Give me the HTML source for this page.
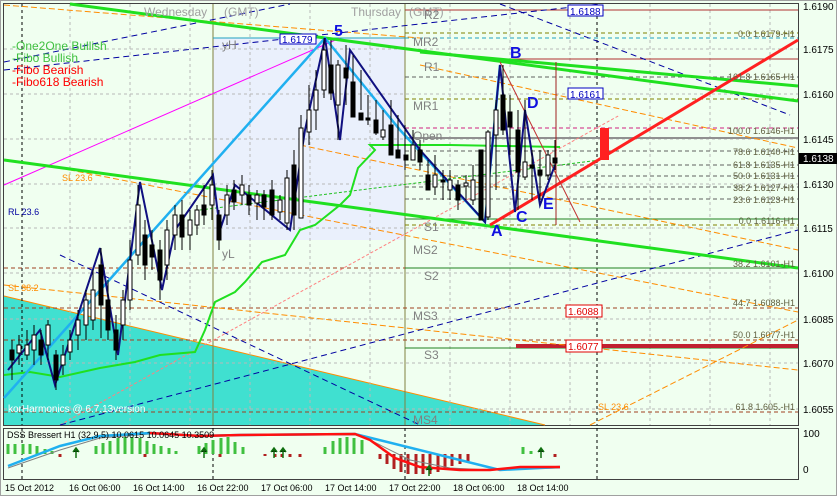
<!DOCTYPE html><html><head><meta charset="utf-8"><style>
body{margin:0;background:#d4d0c8;}
svg{display:block;font-family:"Liberation Sans",sans-serif;}
</style></head><body>
<svg width="837" height="496" xmlns="http://www.w3.org/2000/svg">
<rect x="0" y="0" width="837" height="496" fill="#f0fff0"/>
<rect x="0.5" y="0.5" width="836" height="495" fill="none" stroke="#a0a0a0"/>
<rect x="3.5" y="3.5" width="795" height="422" fill="none" stroke="#404040"/>
<rect x="3.5" y="428.5" width="795" height="51" fill="none" stroke="#404040"/>
<rect x="213" y="38" width="192" height="202" fill="#eaf0fc"/>
<polygon points="4,296 545,425 4,425" fill="#40e0d0"/>
<line x1="4" y1="296" x2="545" y2="425" stroke="#ff8c00" stroke-width="1"/>
<g stroke="#b8b8b8" stroke-dasharray="3,3" stroke-width="1">
<line x1="4" y1="49" x2="798" y2="49"/><line x1="4" y1="94" x2="798" y2="94"/><line x1="4" y1="139" x2="798" y2="139"/><line x1="4" y1="184" x2="798" y2="184"/><line x1="4" y1="228" x2="798" y2="228"/><line x1="4" y1="273" x2="798" y2="273"/><line x1="4" y1="319" x2="798" y2="319"/><line x1="4" y1="363" x2="798" y2="363"/><line x1="4" y1="409" x2="798" y2="409"/>
<line x1="70" y1="4" x2="70" y2="425"/><line x1="130" y1="4" x2="130" y2="425"/><line x1="190" y1="4" x2="190" y2="425"/><line x1="250" y1="4" x2="250" y2="425"/><line x1="310" y1="4" x2="310" y2="425"/><line x1="370" y1="4" x2="370" y2="425"/><line x1="450" y1="4" x2="450" y2="425"/><line x1="510" y1="4" x2="510" y2="425"/><line x1="570" y1="4" x2="570" y2="425"/><line x1="650" y1="4" x2="650" y2="425"/><line x1="710" y1="4" x2="710" y2="425"/><line x1="770" y1="4" x2="770" y2="425"/>
</g>
<g stroke="#000" stroke-dasharray="3,3"><line x1="22" y1="4" x2="22" y2="425"/><line x1="597" y1="4" x2="597" y2="425"/><line x1="22" y1="428" x2="22" y2="479"/><line x1="405" y1="428" x2="405" y2="479"/><line x1="597" y1="428" x2="597" y2="479"/><line x1="213" y1="428" x2="213" y2="479"/></g>
<line x1="213" y1="4" x2="213" y2="425" stroke="#808040"/><line x1="405" y1="4" x2="405" y2="425" stroke="#808040"/>
<g stroke-width="1" stroke-dasharray="4,3">
<line x1="405" y1="33" x2="798" y2="33" stroke="#808000"/>
<line x1="405" y1="38" x2="798" y2="38" stroke="#20a0c0"/>
<line x1="405" y1="77" x2="798" y2="77" stroke="#606060"/>
<line x1="405" y1="99" x2="798" y2="99" stroke="#808000"/>
<line x1="405" y1="128" x2="798" y2="128" stroke="#d02080"/>
<line x1="405" y1="151" x2="798" y2="151" stroke="#606060"/>
<line x1="405" y1="165" x2="798" y2="165" stroke="#606060"/>
<line x1="405" y1="176" x2="798" y2="176" stroke="#606060"/>
<line x1="405" y1="187" x2="798" y2="187" stroke="#606060"/>
<line x1="405" y1="199" x2="798" y2="199" stroke="#606060"/>
<line x1="405" y1="225" x2="798" y2="225" stroke="#808000"/>
<line x1="4" y1="268" x2="798" y2="268" stroke="#a04020"/>
<line x1="4" y1="308" x2="798" y2="308" stroke="#a04020"/>
<line x1="4" y1="340" x2="798" y2="340" stroke="#a04020"/>
<line x1="4" y1="412" x2="798" y2="412" stroke="#a04020"/>
</g>
<line x1="405" y1="10" x2="798" y2="10" stroke="#b03030"/>
<line x1="500" y1="59" x2="798" y2="59" stroke="#b03030"/>
<line x1="405" y1="138" x2="798" y2="138" stroke="#909090" stroke-width="2"/>
<line x1="405" y1="219" x2="798" y2="219" stroke="#208020"/>
<line x1="405" y1="268" x2="798" y2="268" stroke="#208020"/>
<line x1="405" y1="348" x2="798" y2="348" stroke="#208020"/>
<line x1="516" y1="346" x2="798" y2="346" stroke="#c02030" stroke-width="4"/>
<line x1="213" y1="38" x2="405" y2="38" stroke="#20a0c0"/>
<g stroke="#ff8c00" stroke-dasharray="6,3" fill="none">
<line x1="4" y1="5" x2="420" y2="38"/>
<line x1="420" y1="65" x2="798" y2="148"/>
<line x1="4" y1="285" x2="798" y2="370"/>
<line x1="60" y1="168" x2="798" y2="312"/>
<line x1="300" y1="145" x2="798" y2="250"/>
<line x1="590" y1="425" x2="798" y2="320"/>
</g>
<g stroke="#ff8080" stroke-dasharray="3,2"><line x1="60" y1="425" x2="620" y2="115"/></g>
<g stroke="#0000a0" stroke-dasharray="6,4" fill="none">
<line x1="4" y1="70" x2="600" y2="4"/>
<line x1="4" y1="62" x2="290" y2="4"/>
<line x1="60" y1="425" x2="798" y2="230"/>
<line x1="60" y1="255" x2="420" y2="425"/>
<line x1="500" y1="4" x2="790" y2="115"/>
</g>
<line x1="4" y1="185" x2="340" y2="38" stroke="#ff00ff"/>
<line x1="200" y1="210" x2="600" y2="160" stroke="#20c020" stroke-dasharray="3,2"/>
<g stroke="#20e020" stroke-width="3" fill="none">
<line x1="70" y1="4" x2="798" y2="101"/>
<line x1="420" y1="52" x2="798" y2="86"/>
<line x1="4" y1="160" x2="798" y2="268"/>
<polyline stroke-width="2" points="4,375 30,372 60,377 100,368 135,362 160,355 195,352 205,330 215,302 235,292 245,282 262,262 285,255 300,230 315,225 340,205 350,195 358,168 375,150 370,145 410,145 450,145 560,147"/>
</g>
<line x1="490" y1="225" x2="798" y2="40" stroke="#ff2020" stroke-width="3"/>
<line x1="500" y1="62" x2="580" y2="222" stroke="#c03030"/>
<line x1="556" y1="62" x2="556" y2="225" stroke="#a02020"/>
<rect x="600" y="128" width="9" height="32" fill="#ff2020"/>
<polyline fill="none" stroke="#20b0f0" stroke-width="2.5" points="4,398 325,38 400,130 485,222 500,65"/>
<polyline fill="none" stroke="#101080" stroke-width="2" points="8,370 40,330 55,385 100,248 118,355 140,182 162,290 175,230 213,175 220,230 235,185 290,230 305,130 325,38 340,140 350,50 420,150 485,222 500,65 515,212 525,110 540,205 555,165"/>
<g stroke="#000" stroke-width="1">
<path d="M12 340v40M19 335v30M27 330v30M34 325v40M41 330v35M48 320v40M56 350v40M63 345v30M70 330v30M78 310v40M86 290v50M93 270v60M101 248v90M108 280v60M116 315v45M123 290v50M130 240v70M138 185v80M145 220v60M152 230v40M160 240v60M167 220v60M175 205v45M182 200v50M190 210v40M197 205v30M204 185v40M212 170v50M219 210v40M227 185v40M234 180v30M242 175v30M249 185v30M257 190v30M264 190v30M272 180v40M280 195v25M287 170v60M294 150v80M301 115v70M309 85v60M316 70v60M324 38v60M331 40v60M338 60v80M346 45v60M353 55v50M361 70v40M368 95v30M376 100v35M383 110v30M391 100v30M398 115v35M405 125v45M413 130v30M420 140v30M428 160v30M435 155v40M443 170v30M450 170v30M458 180v30M466 175v25M473 165v40M481 150v70M488 130v90M496 100v90M503 65v70M510 95v60M518 110v100M525 100v80M532 150v50M540 150v50M548 150v30M555 140v30"/>
</g>
<g stroke="#000" fill="#fff">
<rect x="10" y="350" width="4" height="10" fill="#000"/><rect x="17" y="345" width="4" height="8"/><rect x="25" y="345" width="4" height="10"/><rect x="32" y="335" width="4" height="15"/><rect x="39" y="340" width="4" height="15" fill="#000"/><rect x="46" y="325" width="4" height="20"/><rect x="54" y="355" width="4" height="25" fill="#000"/><rect x="61" y="355" width="4" height="10"/><rect x="68" y="340" width="4" height="12"/><rect x="76" y="320" width="4" height="15"/><rect x="84" y="300" width="4" height="25"/><rect x="91" y="290" width="4" height="30"/><rect x="99" y="265" width="4" height="40" fill="#000"/><rect x="106" y="300" width="4" height="30" fill="#000"/><rect x="114" y="330" width="4" height="20" fill="#000"/><rect x="121" y="300" width="4" height="25"/><rect x="128" y="260" width="4" height="40"/><rect x="136" y="205" width="4" height="50"/><rect x="143" y="235" width="4" height="30" fill="#000"/><rect x="150" y="245" width="4" height="12" fill="#000"/><rect x="158" y="250" width="4" height="30" fill="#000"/><rect x="165" y="230" width="4" height="35"/><rect x="173" y="215" width="4" height="20"/><rect x="180" y="215" width="4" height="22" fill="#000"/><rect x="188" y="220" width="4" height="15"/><rect x="195" y="210" width="4" height="15"/><rect x="202" y="205" width="4" height="10" fill="#000"/><rect x="210" y="185" width="4" height="20"/><rect x="217" y="215" width="4" height="25" fill="#000"/><rect x="225" y="195" width="4" height="20"/><rect x="232" y="190" width="4" height="12" fill="#000"/><rect x="240" y="185" width="4" height="10"/><rect x="247" y="195" width="4" height="10" fill="#000"/><rect x="255" y="195" width="4" height="8"/><rect x="262" y="195" width="4" height="12" fill="#000"/><rect x="270" y="190" width="4" height="25" fill="#000"/><rect x="278" y="200" width="4" height="12"/><rect x="285" y="178" width="4" height="45"/><rect x="292" y="165" width="4" height="50" fill="#000"/><rect x="299" y="128" width="4" height="90"/><rect x="307" y="110" width="4" height="22"/><rect x="314" y="90" width="4" height="20"/><rect x="322" y="50" width="4" height="40"/><rect x="329" y="65" width="4" height="28" fill="#000"/><rect x="336" y="65" width="4" height="40"/><rect x="344" y="68" width="4" height="10" fill="#000"/><rect x="351" y="82" width="4" height="35" fill="#000"/><rect x="359" y="113" width="4" height="7" fill="#000"/><rect x="366" y="118" width="4" height="2" fill="#000"/><rect x="374" y="120" width="4" height="13" fill="#000"/><rect x="381" y="130" width="4" height="7"/><rect x="389" y="125" width="4" height="30" fill="#000"/><rect x="396" y="150" width="4" height="8" fill="#000"/><rect x="404" y="155" width="4" height="5" fill="#000"/><rect x="411" y="145" width="4" height="15"/><rect x="418" y="150" width="4" height="12" fill="#000"/><rect x="426" y="175" width="4" height="15" fill="#000"/><rect x="433" y="175" width="4" height="12"/><rect x="441" y="180" width="4" height="2" fill="#000"/><rect x="448" y="180" width="4" height="10"/><rect x="456" y="185" width="4" height="15" fill="#000"/><rect x="464" y="183" width="4" height="3"/><rect x="471" y="180" width="4" height="20"/><rect x="479" y="150" width="4" height="70" fill="#000"/><rect x="486" y="132" width="4" height="85"/><rect x="494" y="110" width="4" height="25"/><rect x="501" y="95" width="4" height="35" fill="#000"/><rect x="508" y="112" width="4" height="15" fill="#000"/><rect x="516" y="130" width="4" height="42" fill="#000"/><rect x="523" y="162" width="4" height="15"/><rect x="530" y="165" width="4" height="3" fill="#000"/><rect x="538" y="170" width="4" height="5" fill="#000"/><rect x="546" y="155" width="4" height="20"/><rect x="553" y="158" width="4" height="5" fill="#000"/>
</g>
<g font-size="12" fill="#a0a0a0"><text x="144" y="16">Wednesday</text><text x="224" y="16">(GMT)</text><text x="351" y="16">Thursday</text><text x="409" y="16">(GMT)</text></g>
<g font-size="12" fill="#808080"><text x="424" y="19">R2</text><text x="413" y="46">MR2</text><text x="424" y="71">R1</text><text x="413" y="110">MR1</text><text x="413" y="140">Open</text><text x="424" y="231">S1</text><text x="413" y="254">MS2</text><text x="424" y="280">S2</text><text x="413" y="320">MS3</text><text x="424" y="359">S3</text><text x="413" y="424">MS4</text><text x="222" y="49">yH</text><text x="222" y="258">yL</text></g>
<g font-size="12"><text x="12" y="50" fill="#40c040">-One2One Bullish</text><text x="12" y="62" fill="#40c040">-Fibo Bullish</text><text x="12" y="74" fill="#ff0000">-Fibo Bearish</text><text x="12" y="86" fill="#ff0000">-Fibo618 Bearish</text></g>
<text x="8" y="412" font-size="10" fill="#fff">korHarmonics @ 6.7.13version</text>
<g font-size="16" fill="#1010e0" font-weight="bold"><text x="334" y="36">5</text><text x="510" y="58">B</text><text x="527" y="108">D</text><text x="491" y="236">A</text><text x="516" y="222">C</text><text x="543" y="209">E</text></g>
<g font-size="9" fill="#606040" text-anchor="end"><text x="795" y="37">0.0 1.6179-H1</text><text x="795" y="80">161.8 1.6165-H1</text><text x="795" y="134">100.0 1.6146-H1</text><text x="795" y="155">78.6 1.6140-H1</text><text x="795" y="168">61.8 1.6135-H1</text><text x="795" y="179">50.0 1.6131-H1</text><text x="795" y="191">38.2 1.6127-H1</text><text x="795" y="203">23.6 1.6123-H1</text><text x="795" y="224">0.0 1.6116-H1</text><text x="795" y="267">38.2 1.6101-H1</text><text x="795" y="306">44.7 1.6088-H1</text><text x="795" y="338">50.0 1.6077-H1</text><text x="795" y="410">61.8 1.605.-H1</text></g>
<g font-size="10"><rect x="280" y="34" width="36" height="10" fill="#fff" stroke="#0000c0"/><text x="282" y="43" fill="#0000c0">1.6179</text>
<rect x="568" y="5" width="35" height="11" fill="#fff" stroke="#0000c0"/><text x="570" y="15" fill="#0000c0">1.6188</text>
<rect x="568" y="88" width="35" height="11" fill="#fff" stroke="#0000c0"/><text x="570" y="98" fill="#0000c0">1.6161</text>
<rect x="566" y="305" width="36" height="12" fill="#fff" stroke="#e00000"/><text x="568" y="315" fill="#e00000">1.6088</text>
<rect x="566" y="340" width="36" height="12" fill="#fff" stroke="#e00000"/><text x="568" y="350" fill="#e00000">1.6077</text></g>
<g font-size="9" fill="#ff8c00"><text x="62" y="181">SL 23.6</text><text x="8" y="291">SL 38.2</text><text x="598" y="410">SL 23.6</text></g>
<text x="8" y="215" font-size="9" fill="#0000a0">RL 23.6</text>
<g font-size="10" fill="#000"><text x="803" y="10">1.6190</text><text x="803" y="53">1.6175</text><text x="803" y="98">1.6160</text><text x="803" y="143">1.6145</text><text x="803" y="188">1.6130</text><text x="803" y="232">1.6115</text><text x="803" y="277">1.6100</text><text x="803" y="323">1.6085</text><text x="803" y="367">1.6070</text><text x="803" y="413">1.6055</text><text x="803" y="437">100</text><text x="803" y="473">0</text></g>
<rect x="799" y="153" width="38" height="11" fill="#000"/><text x="803" y="162" font-size="10" fill="#fff">1.6138</text>
<g stroke-width="3">
<path d="M8 444v10M15 444v10M23 444v10M30 444v10M37 446v8M45 449v5M52 451v3M96 446v8M103 443v11M110 441v13M118 438v16M125 437v17M132 437v17M140 438v16M147 441v13M154 444v10M161 446v8M169 448v6M176 451v3M199 446v8M206 443v11M213 440v14M221 438v16M228 437v17M235 442v12M243 447v7M325 447v7M333 441v13M340 438v16M347 437v17M354 438v16M362 440v14M523 447v7M531 451v3" stroke="#40c040"/>
<path d="M380 454v5M387 454v10M394 454v15M401 454v18M408 454v20M416 454v20M423 454v20M430 454v20M438 454v18M445 454v15M452 454v12M460 454v10M468 454v8M275 454v3M282 454v3M290 454v3M60 454v3M145 454v3M220 454v3M555 454v3M300 454v3M265 454v2" stroke="#b02020"/>
</g>
<polyline fill="none" stroke="#808080" points="8,468 60,450 100,438 150,434 200,435 240,435 360,435 380,445 410,460 450,468 490,470 520,469 560,468"/>
<polyline fill="none" stroke="#20b0f0" stroke-width="2.5" points="8,466 60,446 100,436 150,433 200,436 240,435 355,434 500,470 560,467"/>
<polyline fill="none" stroke="#ff1010" stroke-width="2.5" points="150,433 200,436 240,435 355,434 370,440 395,458 420,467 460,470 490,470 520,467 560,467"/>
<g stroke="#107010" stroke-width="1.5"><path d="M76 458v-9M73 452l3-4 3 4M204 458v-9M201 452l3-4 3 4M274 458v-9M271 452l3-4 3 4M283 458v-9M280 452l3-4 3 4M429 476v-9M426 470l3-4 3 4M541 458v-9M538 452l3-4 3 4"/></g>
<text x="7" y="438" font-size="9" fill="#000">DSS Bressert H1 (32,9,5) 10.0615 10.0645 10.3509</text>
<g font-size="9" fill="#000"><text x="5" y="491">15 Oct 2012</text><text x="69" y="491">16 Oct 06:00</text><text x="133" y="491">16 Oct 14:00</text><text x="197" y="491">16 Oct 22:00</text><text x="261" y="491">17 Oct 06:00</text><text x="325" y="491">17 Oct 14:00</text><text x="389" y="491">17 Oct 22:00</text><text x="453" y="491">18 Oct 06:00</text><text x="517" y="491">18 Oct 14:00</text></g>
</svg>
</body></html>
